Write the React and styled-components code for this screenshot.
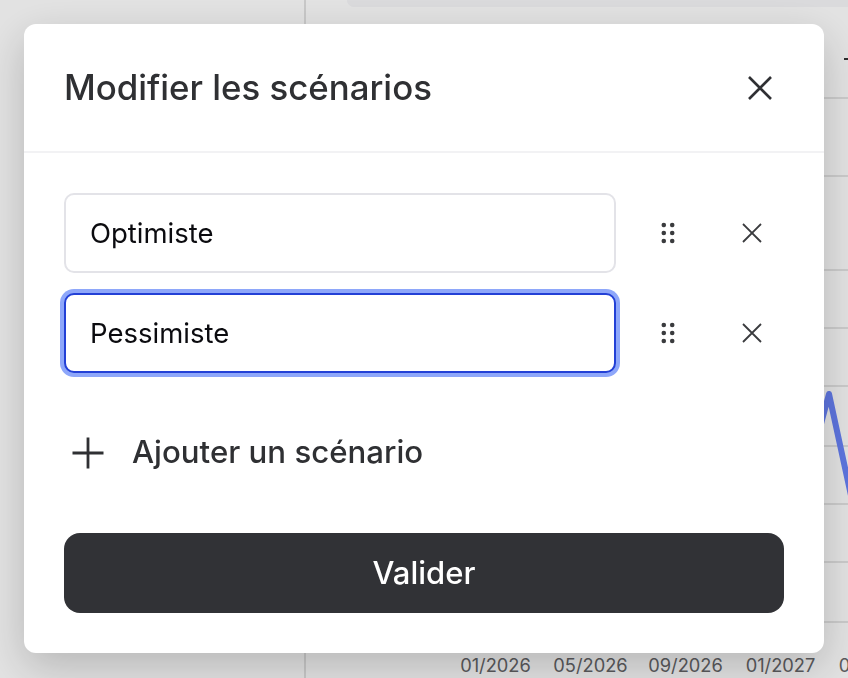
import React from 'react';
import styled, { createGlobalStyle } from 'styled-components';

const Global = createGlobalStyle`
  html, body {
    margin: 0;
    height: 100%;
    overflow: hidden;
    background: #fff;
    font-family: Inter, "Liberation Sans", sans-serif;
  }
  * { box-sizing: border-box; }
`;

const Page = styled.div`
  display: flex;
  width: 848px;
  height: 678px;
  overflow: hidden;
`;

const Sidebar = styled.aside`
  width: 306px;
  flex: none;
  border-right: 2px solid #e2e2e2;
`;

const Main = styled.main`
  flex: 1;
  min-width: 0;
  display: flex;
  flex-direction: column;
`;

const TopBar = styled.div`
  height: 7px;
  flex: none;
  margin-left: 41px;
  background: #f6f6f9;
  border-bottom-left-radius: 8px;
`;

const Chart = styled.svg`
  display: block;
  flex: 1;
  min-height: 0;
`;

const Axis = styled.div`
  display: flex;
  flex: none;
  height: 26px;
  padding: 0 0 0 142px;
  color: #666669;
  font-size: 18.3px;
  line-height: 26px;
`;

const Tick = styled.span`
  flex: none;
  width: 95px;
  text-align: center;
`;

const Overlay = styled.div`
  position: fixed;
  inset: 0;
  padding: 24px;
  background: rgba(0, 0, 0, 0.115);
`;

const Modal = styled.section`
  width: 800px;
  height: 629px;
  background: #fff;
  border-radius: 12px;
  box-shadow: 0 14px 44px rgba(0, 0, 0, 0.2);
`;

const Header = styled.header`
  display: flex;
  align-items: center;
  justify-content: space-between;
  height: 129px;
  padding: 0 40px;
  border-bottom: 2px solid #f2f2f4;
`;

const Title = styled.h2`
  margin: 0 0 2px;
  color: #2f3033;
  font-size: 34.8px;
  font-weight: 500;
  line-height: 40px;
`;

const CloseButton = styled.button`
  display: flex;
  align-items: center;
  justify-content: center;
  width: 48px;
  height: 48px;
  padding: 0;
  border: 0;
  background: none;
  color: #2f3033;
`;

const Body = styled.div`
  display: flex;
  flex-direction: column;
  padding: 40px;
`;

const Rows = styled.div`
  display: flex;
  flex-direction: column;
  gap: 20px;
`;

const Row = styled.div`
  display: flex;
  align-items: center;
  gap: 20px;
`;

const NameInput = styled.input`
  flex: 1;
  min-width: 0;
  height: 80px;
  padding: 0 24px;
  border: 2px solid ${p => (p.$focused ? '#2340d6' : '#e3e3e8')};
  border-radius: 10px;
  outline: none;
  box-shadow: ${p => (p.$focused ? '0 0 0 4px #8ea7fa' : 'none')};
  background: #fff;
  color: #0b0b0f;
  font-family: inherit;
  font-size: 27.5px;
`;

const IconButton = styled.button`
  display: flex;
  align-items: center;
  justify-content: center;
  flex: none;
  width: 64px;
  height: 64px;
  padding: 0;
  border: 0;
  background: none;
  color: #3a3b3e;
`;

const AddButton = styled.button`
  display: flex;
  align-items: center;
  gap: 20px;
  height: 80px;
  margin-top: 40px;
  padding: 0;
  border: 0;
  background: none;
  color: #2f3033;
  font-family: inherit;
  font-size: 31.2px;
  font-weight: 500;
  line-height: 38px;
`;

const AddLabel = styled.span`
  margin-bottom: 2px;
`;

const SubmitButton = styled.button`
  height: 80px;
  margin-top: 40px;
  padding: 0 0 2px;
  border: 0;
  border-radius: 16px;
  background: #313236;
  color: #fff;
  font-family: inherit;
  font-size: 31px;
  font-weight: 500;
`;

const CrossIcon = ({ size, weight }) => (
  <svg width={size} height={size} viewBox={`0 0 ${size} ${size}`} fill="none" stroke="currentColor" strokeWidth={weight}>
    <path d={`M1 1 L${size - 1} ${size - 1} M${size - 1} 1 L1 ${size - 1}`} />
  </svg>
);

const GripIcon = () => (
  <svg width="14" height="22" viewBox="0 0 14 22" fill="currentColor">
    {[3, 11, 19].map(y => (
      <g key={y}>
        <circle cx="2.8" cy={y} r="2.3" />
        <circle cx="11.2" cy={y} r="2.3" />
      </g>
    ))}
  </svg>
);

const PlusIcon = () => (
  <svg width="48" height="48" viewBox="0 0 48 48" fill="none" stroke="currentColor" strokeWidth="2.8">
    <path d="M24 8.5 V39.5 M8.5 24 H39.5" />
  </svg>
);

const gridLines = [98, 176, 270, 328, 386, 446, 504, 562, 622];
const ticks = ['01/2026', '05/2026', '09/2026', '01/2027', '05/2027'];
const scenarios = ['Optimiste', 'Pessimiste'];

export default function App() {
  return (
    <>
      <Global />
      <Page>
        <Sidebar />
        <Main>
          <TopBar />
          <Chart viewBox="0 7 542 645" preserveAspectRatio="none">
            {gridLines.map(y => (
              <line key={y} x1="0" x2="542" y1={y} y2={y} stroke="#dcdcdc" strokeWidth="1.6" />
            ))}
            <line x1="538" x2="542" y1="59" y2="59" stroke="#333" strokeWidth="2" />
            <polyline points="508,450 523,394 546,500" fill="none" stroke="#6a84fb" strokeWidth="6" strokeLinejoin="round" />
          </Chart>
          <Axis>
            {ticks.map(t => <Tick key={t}>{t}</Tick>)}
          </Axis>
        </Main>
      </Page>
      <Overlay>
        <Modal>
          <Header>
            <Title>Modifier les scénarios</Title>
            <CloseButton><CrossIcon size={24} weight={2.6} /></CloseButton>
          </Header>
          <Body>
            <Rows>
              {scenarios.map((name, i) => (
                <Row key={name}>
                  <NameInput defaultValue={name} $focused={i === 1} />
                  <IconButton><GripIcon /></IconButton>
                  <IconButton><CrossIcon size={20} weight={1.8} /></IconButton>
                </Row>
              ))}
            </Rows>
            <AddButton><PlusIcon /><AddLabel>Ajouter un scénario</AddLabel></AddButton>
            <SubmitButton>Valider</SubmitButton>
          </Body>
        </Modal>
      </Overlay>
    </>
  );
}
